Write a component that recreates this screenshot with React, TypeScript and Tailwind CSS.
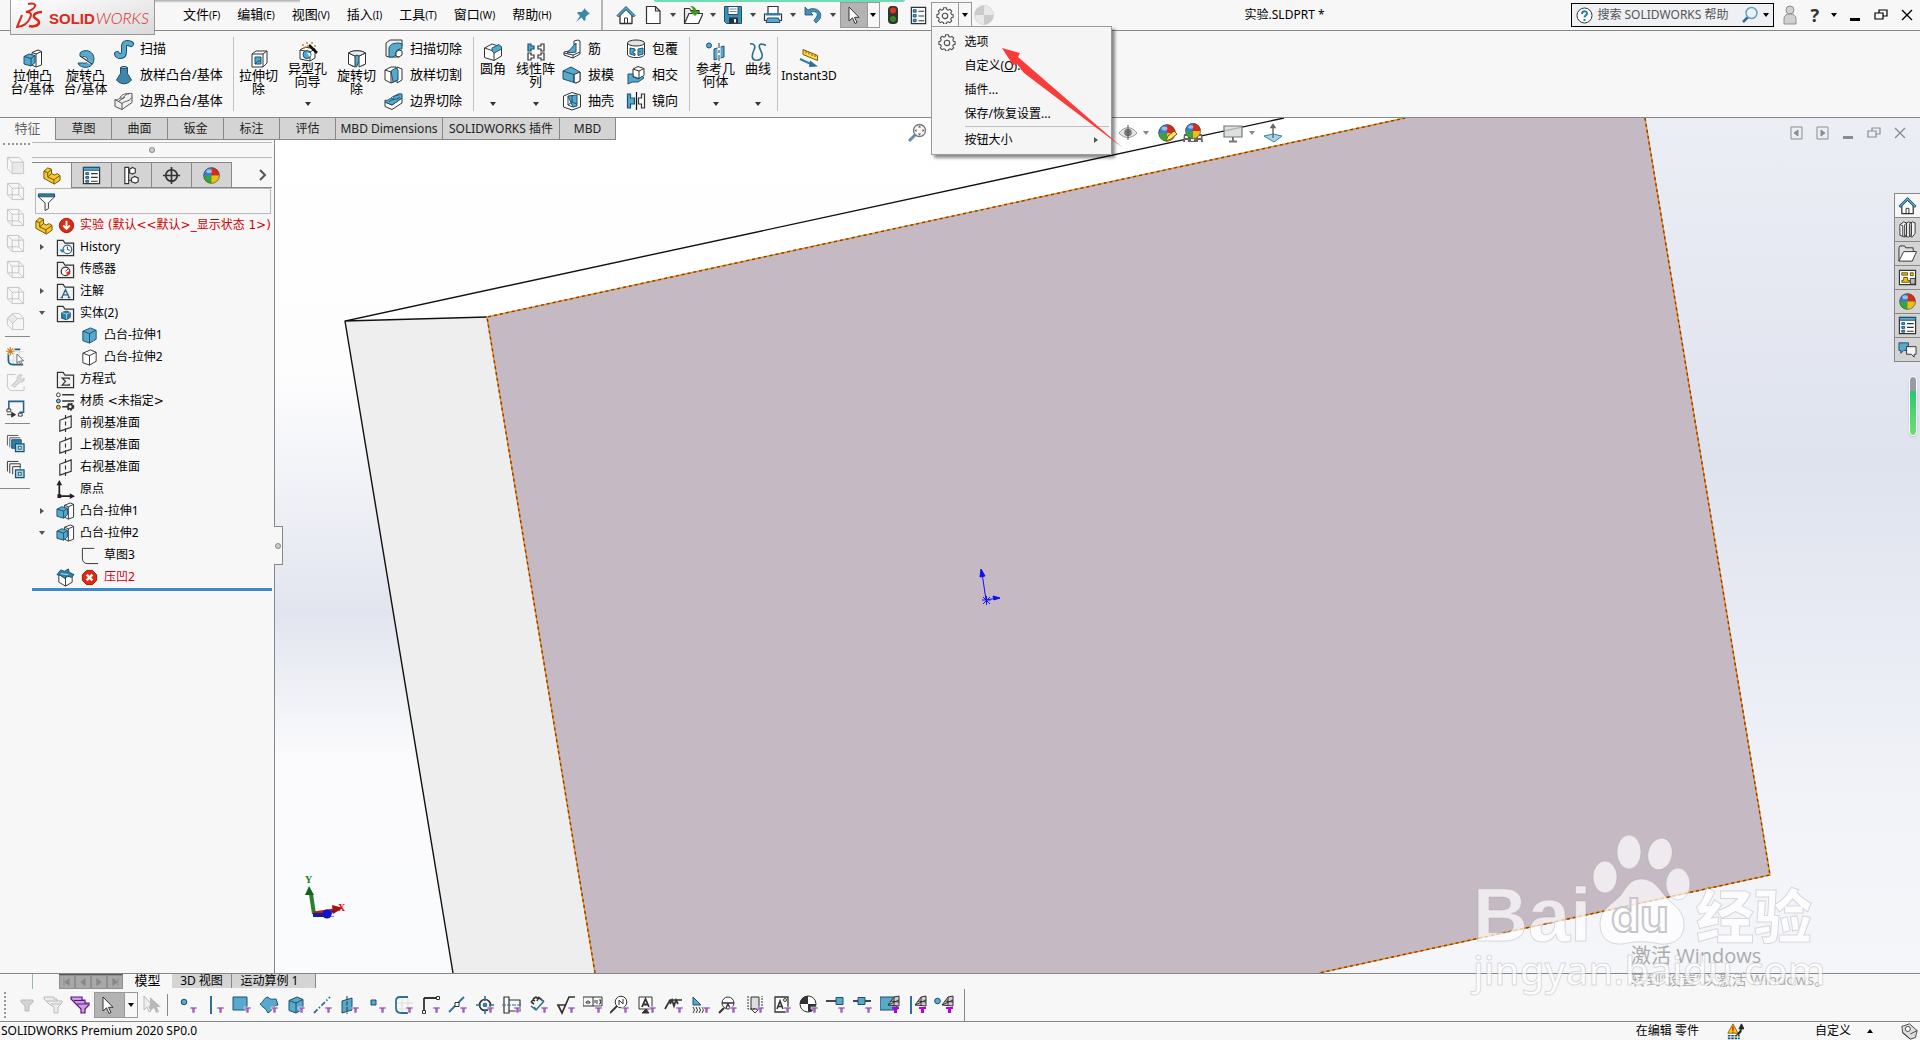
import { useState, type ReactNode } from 'react';

const K = '#333333';
const B = '#58a9cc';
const D = '#1b526f';
const G = '#b9b9b9';

function Svg({ children, size = 20, className = '' }: { children: ReactNode; size?: number; className?: string }) {
  return (
    <svg viewBox="0 0 20 20" width={size} height={size} fill="none" className={`shrink-0 ${className}`} aria-hidden="true">
      {children}
    </svg>
  );
}

const cube = (
  <g strokeLinejoin="round">
    <path d="M3 5.5 11 2l6 2.500v9.500L10 18l-7-2.500z" fill={B} stroke={D} />
    <path d="M3 5.500 10 8l7-3.500M10 8v10" stroke={D} />
  </g>
);

const part = (
  <g stroke="#6f5406" strokeLinejoin="round">
    <path d="M2 5.500 6 2l4 1.500V8l3 1.500L16 8l3 2v5l-6 4L2 13z" fill="#f5c731" />
    <path d="M2 5.500 6 7v4.500l6.500 3V19M6 7l4-3.500M6 11.500 10 8M12.500 14.500 19 10" />
  </g>
);

const boss = (
  <g strokeLinejoin="round">
    <path d="M9 3.500 15 1l3.500 1.500V16L13 18l-4-2z" fill="#fff" stroke={K} />
    <path d="M13 18V5L9 3.500M13 5l5.500-2.500" stroke={K} />
    <path d="M1 7.500 6 5l6 1.500v7L8 17l-7-2z" fill={B} stroke={D} />
    <path d="M1 7.500 8 9.500V17M8 9.500l4-3" stroke={D} />
  </g>
);

const folder = <path d="M1.500 18.500v-16h6l2 3h9v13z" fill="#f1f1f1" stroke={K} strokeWidth="1.300" />;

const ball = (
  <g>
    <circle cx="10" cy="10" r="8.500" fill="#3aa23a" />
    <path d="M10 10V1.500A8.500 8.500 0 0 0 1.500 10z" fill="#3c78d8" />
    <path d="M10 10V1.500A8.500 8.500 0 0 1 18.500 10z" fill="#d9291c" />
    <path d="M10 10h8.500A8.500 8.500 0 0 1 10 18.500z" fill="#eebd16" />
    <circle cx="10" cy="10" r="8.300" stroke="#4a4a4a" strokeOpacity=".6" />
    <ellipse cx="7.500" cy="5.500" rx="3" ry="2" fill="#fff" fillOpacity=".5" />
  </g>
);

const gear = (
  <g stroke="#4c4c4c" strokeWidth="1.200">
    <path d="M8.500 2h3l.6 2 1.500.7 1.900-1 2 2-1 1.900.6 1.500 1.900.5v3l-1.900.5-.7 1.500 1 1.900-2 2-1.900-1-1.500.6-.5 1.900h-3L8 18.100l-1.500-.6-1.900 1-2-2 1-1.900-.7-1.500L1 12.600v-3L2.900 9l.7-1.500-1-1.900 2-2 1.900 1L8 4z" />
    <circle cx="10" cy="11" r="3" />
  </g>
);

const plane = (
  <g stroke={K} strokeWidth="1.200">
    <path d="M4 6.500 16 2v12L4 18z" />
    <path d="M10 1v4M10 8v4M10 15v4" />
  </g>
);

const cursor = <path d="M5 2v14l3.500-3.200L11 18.500l2-1-2.500-5.200H15z" fill="#fff" stroke={K} />;

const house = (
  <g strokeLinejoin="round">
    <path d="M4 10v8.500h12V10l-6-6z" fill="#fff" stroke={K} strokeWidth="1.300" />
    <path d="M8.500 18.500V13h3v5.500" stroke={K} />
    <path d="M1 10.500 10 1.500l9 9-1.500 1.500L10 4.500 2.500 12z" fill={B} stroke={D} />
  </g>
);

const list = (
  <g>
    <path d="M2.500 1.500h15v17h-15z" fill="#f4f9fc" stroke={K} strokeWidth="1.300" />
    <path d="M4.500 4h3v2.500h-3zM4.500 9h3v2.500h-3zM4.500 14h3v2.500h-3z" fill={B} stroke={D} />
    <path d="M10 5.500h6M10 10.500h6M10 15.500h6" stroke={K} strokeWidth="1.200" />
  </g>
);

const listHead = (
  <g>
    <path d="M1.500 1.500h17v17h-17z" fill="#fff" stroke={K} strokeWidth="1.300" />
    <path d="M1.500 1.500h17v3h-17z" fill={B} stroke={D} />
    <path d="M4 7h3v2H4zM4 11h3v2H4zM4 15h3v2H4z" fill={B} stroke={D} />
    <path d="M9.500 8h7M9.500 12h7M9.500 16h7" stroke={K} strokeWidth="1.200" />
  </g>
);

const icons: Record<string, ReactNode> = {
  house,
  newDoc: <path d="M3.500 1.500h9l4.500 4.500v12.500H3.500zM12.500 1.500v4.500H17" fill="#fff" stroke={K} strokeWidth="1.200" />,
  open: (
    <g strokeLinejoin="round">
      <path d="M1.500 18.500v-15h5l1.500 2h8v3" fill="#ececec" stroke={K} strokeWidth="1.200" />
      <path d="M1.500 18.500 6 8.500h14l-4.500 10z" fill="#fff" stroke={K} strokeWidth="1.200" />
      <path d="M7 1c4 0 6 2 6.500 5h3.500l-5 5-5-5h3c0-2-1-4-3-5z" fill="#3d9a1c" />
    </g>
  ),
  save: (
    <g>
      <path d="M1.500 1.500h17v17h-15l-2-2z" fill="#3f8fb5" stroke={D} />
      <path d="M5 1.500h10v8H5z" fill="#fff" stroke={D} />
      <path d="M6.500 4h7M6.500 6.500h7" stroke="#888" />
      <path d="M6 12.500h9v6H6z" fill="#25303a" />
      <path d="M11 14h2v3.500h-2z" fill="#fff" />
    </g>
  ),
  print: (
    <g>
      <path d="M5 9V1.500h10V9z" fill="#fff" stroke={K} strokeWidth="1.200" />
      <path d="M1.500 9h17v6.500h-17z" fill="#fafafa" stroke={K} strokeWidth="1.200" />
      <path d="M3 8h14v2.500H3z" fill="#2f7fa6" />
      <path d="M4.500 13h11l1.500 4.500H3z" fill={B} stroke={D} />
    </g>
  ),
  undo: <path d="M2 2v8h8L7.500 7.500C12 5 16 8 13.500 12L11 15.500l2 2.500c4-3 6-7 4-10.500C15 3.500 9 2.500 5 5z" fill="#4690b8" stroke={D} strokeWidth=".8" />,
  cursor,
  traffic: (
    <g>
      <rect x="5" y="1" width="10" height="18" rx="4" fill="#333" />
      <circle cx="10" cy="5.500" r="3" fill="#e2371f" />
      <circle cx="10" cy="14" r="3" fill="#2f8a1d" />
    </g>
  ),
  list,
  listHead,
  gear,
  ball,
  grayBall: (
    <g>
      <circle cx="10" cy="10" r="9.500" fill="#e9e9e9" stroke="#d8d8d8" />
      <path d="M10 10V.5A9.500 9.500 0 0 0 .5 10zM10 10v9.500A9.500 9.500 0 0 0 19.500 10z" fill="#cbcbcb" />
    </g>
  ),
  boss,
  revolve: (
    <g>
      <path d="M4 4c5-5 14-2 14 6s-9 11-15 6l-1-2h6c4 1 5-4 2-6-2-1-4 0-6-1z" fill={B} stroke={D} />
      <path d="M4 7.500l11 7" stroke="#fff" strokeWidth="2.500" />
      <path d="M4 7l12 8" stroke={K} strokeWidth="1.200" />
    </g>
  ),
  sweep: (
    <g strokeLinecap="round">
      <path d="M3 15c1 3 7 3 7-2V8c0-5 4-4.500 7-3" stroke={D} strokeWidth="6" />
      <path d="M3 15c1 3 7 3 7-2V8c0-5 4-4.500 7-3" stroke={B} strokeWidth="4" />
    </g>
  ),
  loft: <path d="M6.500 2.500c2-1.500 5-1.500 7 0v6L17.500 15c-4 5-11 5-15 0l4-6.500zM6.500 2.500c2 1.500 5 1.500 7 0" fill="#3f86a8" stroke={D} />,
  boundary: (
    <g stroke="#555" strokeLinejoin="round">
      <path d="M1 8.500c3 2 4-3 8-1 1-3 5-6 9-5v9L8 18.500l-7-3z" fill="#f0f0f0" />
      <path d="M1 8.500l7 4v6M8 12.500c3-3 6-1 10-6M6 7c1-3 5-5 9-4M5 10l6-4" />
    </g>
  ),
  cutBoundary: (
    <g stroke={D} strokeLinejoin="round">
      <path d="M1 11l7 3 10-7v5L8 18.500l-7-3z" fill="#fff" stroke={K} />
      <path d="M1 9c3 2 4-3 8-1 1-3 5-6 9-5v4L8 14l-7-3z" fill={B} />
      <path d="M5 11c3-4 7-1 11-5M7 7c2-2 5-3 8-3" />
    </g>
  ),
  cutExtrude: (
    <g strokeLinejoin="round">
      <path d="M3 5 7 2h11v12l-4 4H3z" fill="#fff" stroke={K} />
      <path d="M3 5h11v13M14 5l4-3" stroke={K} />
      <path d="M6 8h6v7H6z" fill={B} stroke={D} />
      <path d="M6 15l3-3h3" stroke={D} />
    </g>
  ),
  hole: (
    <g strokeLinejoin="round">
      <path d="M2 8l5-3 10 2v9l-5 3-10-2z" fill="#fff" stroke={K} />
      <path d="M2 8l10 2v9M12 10l5-3" stroke={K} />
      <circle cx="9" cy="12.500" r="4" fill={B} stroke={D} />
      <path d="M9 11l3 4a4 4 0 0 0 0-4z" fill="#fff" />
      <path d="M11 3l8 8" stroke="#111" strokeWidth="2.500" />
      <path d="M4 3h2M8 1h2M5 6h2M13 1h2M16 4h2M9 4h2" stroke="#d7881a" strokeWidth="1.600" />
    </g>
  ),
  cutRevolve: (
    <g strokeLinejoin="round">
      <path d="M1.500 4c4-3 13-3 17 0v11l-4 2-3-4-2 5-4-1-4-2z" fill={B} stroke={D} />
      <path d="M1.500 4 8 7v11l-6.500-3zM18.500 4 12 7v11l6.500-3z" fill="#fff" stroke={K} />
      <path d="M1.500 4c4-3 13-3 17 0L12 7l-2-1-2 1z" fill="#e4eff5" stroke={K} />
    </g>
  ),
  cutSweep: (
    <g strokeLinejoin="round">
      <path d="M2 4l4-3h12v6l-3 3v8H5l-3-1z" fill="#eee" stroke={K} />
      <path d="M5 18V9c1-4 5-5 10-5l3 1v5c-5 0-6 1-6 6l-3 2z" fill={B} stroke={D} />
      <path d="M12 13l3-2 3 1v4l-3 2-3-1z" fill="#fff" stroke={K} />
    </g>
  ),
  cutLoft: (
    <g strokeLinejoin="round">
      <path d="M1 5l6-3h5v14l-5 2-6-3z" fill="#fff" stroke={K} />
      <path d="M13 2l5 2v11l-5 3z" fill="#fff" stroke={K} />
      <path d="M7 6l5-3 2 2v10l-5 2z" fill={B} stroke={D} />
      <path d="M1 5l6 2v11" stroke={K} />
    </g>
  ),
  fillet: (
    <g strokeLinejoin="round">
      <path d="M1.500 6 9 2l9.500 3v9L11 18.500l-9.500-3z" fill="#fff" stroke={K} />
      <path d="M9 9c0-2 0-3 0-3l7-3.500L18.500 5v2L11 11z" fill={B} stroke={D} />
      <path d="M1.500 6 9 8.500M11 11v7.500" stroke={K} />
    </g>
  ),
  pattern: (
    <g strokeWidth="1.200">
      <path d="M2 2h3v2h3v3H5v2H2z" fill={B} stroke={D} />
      <path d="M18 2h-3v2h-3v3h3v2h3zM2 11h3v2h3v3H5v2H2zM18 11h-3v2h-3v3h3v2h3z" fill="#fff" stroke={K} />
    </g>
  ),
  rib: (
    <g strokeLinejoin="round">
      <path d="M12 2l4-1 2 1v13l-7 4-9-3v-3l10-2z" fill="#fff" stroke={K} />
      <path d="M14 4v9l-9 1z" fill={B} stroke={D} />
      <path d="M2 14l9 2 7-3M11 16v3" stroke={K} />
    </g>
  ),
  draft: (
    <g strokeLinejoin="round">
      <path d="M1 6 9 2l9 5v9l-4 2-13-4z" fill={B} stroke={D} />
      <path d="M12 9.500l6-2.500v9l-4 2-2-.6z" fill="#fff" stroke={K} />
      <path d="M1 6l11 3.500v8" stroke={D} />
    </g>
  ),
  shell: (
    <g strokeLinejoin="round">
      <path d="M1.500 5 10 1.500 18.500 4v12L10 19l-8.500-3z" fill="#fff" stroke={K} />
      <path d="M6 5l9-1v11l-4 1z" fill={B} stroke={D} />
      <path d="M6 5v9l5 2M10 4v7l5 2M6 14l4-3" stroke={D} />
    </g>
  ),
  wrap: (
    <g>
      <path d="M1.500 4v12c3 3.500 14 3.500 17 0V4" fill="#fff" stroke={K} />
      <ellipse cx="10" cy="4" rx="8.500" ry="3" fill="#e5e5e5" stroke={K} />
      <path d="M4 9l5 1v2H7v2l2 .5v2L4 15zM17 9l-5 1v6.500l5-1.500zM14 11.500v2" fill={B} stroke={D} />
    </g>
  ),
  intersect: (
    <g strokeLinejoin="round">
      <path d="M7 4l5-2.500 6 2v7l-5 3-6-2z" fill="#fff" stroke={K} />
      <path d="M7 4l6 2v7M13 6l5-2.500" stroke={K} />
      <path d="M2 9h5v3l6 2 3-3 2 2-6 4H6l-4 2z" fill={B} stroke={D} />
    </g>
  ),
  mirror: (
    <g strokeWidth="1.200">
      <path d="M1.500 3h3v4h4v6h-4v4h-3z" fill={B} stroke={D} />
      <path d="M18.500 3h-3v4h-3v6h3v4h3z" fill="#fff" stroke={K} />
      <path d="M10.500 1v18" stroke="#111" />
    </g>
  ),
  refGeom: (
    <g>
      <circle cx="3" cy="3.500" r="2.500" fill={B} stroke={D} />
      <path d="M8 7l10-3v11L8 18z" fill={B} stroke={D} />
      <path d="M13 2v17" stroke="#fff" strokeWidth="3" />
      <path d="M13 1v5M13 8v3M13 13v6" stroke={K} />
    </g>
  ),
  curve: (
    <g stroke="#2c6d8f" strokeWidth="1.600">
      <path d="M2 2c4-1 6 2 4 6s-3 9 1 10c5 1 8-2 7-6s-5-9-1-10c2 0 3 1 5 1" />
    </g>
  ),
  instant: (
    <g>
      <path d="M4 1.500 18.500 7.500v5L4 6.500z" fill="#ffd94a" stroke="#7b5a00" />
      <path d="M7 3v2.500M10 4v2.500M13 5.500V8M16 6.500V9" stroke="#7b5a00" />
      <path d="M1 11l12 5.500" stroke="#2f7fa6" strokeWidth="2" />
      <path d="M11 12.500l8 6-9 .5z" fill="#2f6f92" />
    </g>
  ),
  part,
  tree: (
    <g stroke={K} strokeWidth="1.200" fill="#fff">
      <path d="M3 1.500h4v17H3zM7 7h4M7 15h4" />
      <path d="M8 3.500l3-2 3 1.500v4l-3 1.500-3-1.500zM10 13l3-2 4 1.500v4L14 18l-4-1.500z" />
    </g>
  ),
  target: (
    <g stroke={K} strokeWidth="1.800">
      <circle cx="10" cy="10" r="6" />
      <path d="M10 1v18M1 10h18" />
    </g>
  ),
  funnel: (
    <g>
      <path d="M1.500 3h17v2l-6.500 6.500v6l-3.500 2v-8L1.500 5z" fill="#fff" stroke={K} />
      <path d="M1.500 2h17v3h-17z" fill="#2f7fa6" stroke={D} />
    </g>
  ),
  down: (
    <g>
      <circle cx="10" cy="10" r="7.500" fill="#dd2a12" stroke="#a31505" />
      <path d="M10 5v8M6.500 10l3.500 3.500 3.500-3.500" stroke="#fff" strokeWidth="2" />
    </g>
  ),
  error: (
    <g>
      <path d="M7 2.500h6L17.500 7v6L13 17.500H7L2.500 13V7z" fill="#dd2a12" stroke="#a31505" />
      <path d="M7 7l6 6M13 7l-6 6" stroke="#fff" strokeWidth="2.500" />
    </g>
  ),
  history: (
    <g>
      {folder}
      <circle cx="12" cy="12" r="4.500" fill="#fff" stroke="#2f6f92" strokeWidth="1.300" />
      <path d="M12 9v3l2.500 1" stroke={K} />
      <path d="M3.500 12h6l-3 3.500z" fill="#2f7fa6" />
    </g>
  ),
  sensor: (
    <g>
      {folder}
      <circle cx="10" cy="12" r="4.500" fill="#fff" stroke={K} strokeWidth="1.300" />
      <path d="M10 12l3-3" stroke={K} />
      <path d="M11 13l4-2-1 4-3 1.500z" fill="#e2391f" />
    </g>
  ),
  notes: (
    <g>
      {folder}
      <path d="M6 16.500 10 8l4 8.500M7.500 13.500h5M4.800 16.500h2.600M12.400 16.500H15" stroke="#2a6484" strokeWidth="1.400" />
    </g>
  ),
  bodies: (
    <g>
      {folder}
      <path d="M6 9l5-1.500 4 1.500v5l-4 2.500L6 15z" fill="#2f7fa6" stroke={D} />
      <path d="M6 9l5 1.500 4-1.500M11 10.500V16" stroke="#bfe0ee" strokeWidth=".8" />
    </g>
  ),
  cube,
  cubeWhite: (
    <g stroke={K} strokeLinejoin="round">
      <path d="M3 5.500 11 2l6 2.500v9.500L10 18l-7-2.500z" fill="#fff" />
      <path d="M3 5.500 10 8l7-3.500M10 8v10" />
    </g>
  ),
  sigma: (
    <g>
      {folder}
      <path d="M14 10V8.500H6.500L10 12l-3.500 4H14v-1.500" stroke={K} strokeWidth="1.300" />
    </g>
  ),
  material: (
    <g>
      <circle cx="2.500" cy="3" r="2" fill="#fff" stroke={K} />
      <circle cx="2.500" cy="9.500" r="2" fill="#66c0e6" stroke={K} />
      <circle cx="2.500" cy="16" r="2" fill="#f4c430" stroke={K} />
      <path d="M6.500 3H19M6.500 9.500H19M6.500 15.500h5" stroke={K} strokeWidth="1.600" />
      <circle cx="15" cy="15.500" r="3" stroke={K} strokeWidth="2.500" strokeDasharray="2 .8" />
      <circle cx="15" cy="15.500" r="2.300" stroke={K} strokeWidth="1.500" />
    </g>
  ),
  plane,
  origin: (
    <g>
      <path d="M3.500 4v13H16" stroke="#222" strokeWidth="1.800" />
      <path d="M.5 5.500 3.500 0l3 5.500zM14.500 14l5.500 3-5.500 3zM1.500 15h4v4h-4z" fill="#222" />
    </g>
  ),
  sketch: <path d="M15 2.500H2.500V13c0 3 2 5.500 5 5.500H19" stroke={K} />,
  indent: (
    <g strokeLinejoin="round">
      <path d="M3 7l7 3 7-3v8l-7 4-7-4z" fill="#fff" stroke={K} />
      <path d="M10 10v9" stroke={K} />
      <path d="M1 7l4-5 4 1.500L13 1l1 3.500 5 2.500-3 3-4-2-3 3-4-3z" fill="#2f7fa6" stroke={D} />
      <path d="M5 6l8 1" stroke="#bfe0ee" />
    </g>
  ),
  books: (
    <g stroke={K} strokeLinejoin="round" fill="#f4f4f4">
      <path d="M2 5l4-3 3 1v12l-2 3-5-2zM7 5l4-3 3 1v12l-3 3-4-1zM12 4l3-2 3 1v11l-3 4-3-1z" />
      <path d="M2 5l3 1v11M9 6v11M14 5v12" />
    </g>
  ),
  folderOpen: (
    <g stroke={K} strokeLinejoin="round">
      <path d="M1 18V4l1-2h5l1 2h8v4" fill="#ddd" />
      <path d="M1 18 6 8h13.500L15 18z" fill="#fff" />
    </g>
  ),
  palette: (
    <g>
      <path d="M1.500 2.500h17v15h-17z" fill="#fff" stroke={K} strokeWidth="1.200" />
      <path d="M4 5h6v2.500H4zM13 5h3v3h-3zM4 15v-2h2v-3h4v3h2v2z" fill="#f4c020" stroke="#6f5406" />
      <path d="M13 11h5v6h-5z" fill="#bbb" stroke={K} />
    </g>
  ),
  chat: (
    <g strokeLinejoin="round">
      <path d="M1 3h10v8H6l-3 3v-3H1z" fill={B} stroke={D} />
      <path d="M9 7h10v8h-2v3l-3-3H9z" fill="#f6f6f6" stroke={K} />
    </g>
  ),
  zoomFit: (
    <g>
      <path d="M2 18l7-7" stroke="#5c8fa8" strokeWidth="3" />
      <circle cx="12.500" cy="7.500" r="6" fill="#f7f7f7" stroke="#777" strokeWidth="1.300" />
      <path d="M12.500 2.500l1.500 2h-3zM12.500 12.500l1.500-2h-3zM7.500 7.500l2-1.500v3zM17.500 7.500l-2-1.500v3z" fill="#555" />
    </g>
  ),
  eye: (
    <g>
      <path d="M1 10c5-7 13-7 18 0-5 6-13 6-18 0z" fill="#e4e4e4" stroke="#9b9b9b" />
      <circle cx="10" cy="9.500" r="3.800" fill="#777" />
      <path d="M10 2v15" stroke="#555" />
    </g>
  ),
  appearance: (
    <g>
      {ball}
      <path d="M9 18l2-5 6-5 3 3-6 5z" fill="#ffe27a" stroke="#7b5a00" />
    </g>
  ),
  scene: (
    <g>
      <path d="M1 11h18l1 8H0z" fill="#666" />
      <path d="M2 13h3v2H2zM8 16h3v2H8zM15 13h3v2h-3zM2 17h3v2H2zM15 17h3v2h-3z" fill="#eee" />
      <g transform="translate(1 -1) scale(.9)">{ball}</g>
    </g>
  ),
  monitor: (
    <g stroke="#777" strokeWidth="1.200">
      <path d="M1 3h18v11H1z" fill="#d4d8da" fillOpacity=".8" />
      <path d="M10 14v4M6 18.500h8" strokeWidth="2" />
    </g>
  ),
  pinPlane: (
    <g>
      <path d="M1 13l9-2 9 2-8 6z" fill="#a9d5e6" stroke="#3b7f9f" />
      <path d="M10 15V3M8 4.500l2-3 2 3z" stroke="#666" strokeWidth="1.400" fill="#666" />
    </g>
  ),
  wire: (
    <g stroke="#c4c4c4">
      <path d="M1.500 1.500h12l5 5v12h-12l-5-5zM1.500 1.500l5 5h12M6.500 6.500v12M13.500 1.500v12h-12M13.500 13.500l5 5" />
    </g>
  ),
  wireFill: (
    <g stroke="#c4c4c4">
      <path d="M1.500 1.500h12l5 5M1.500 1.500v12l5 5M1.500 1.500l5 5" />
      <path d="M6.500 6.500h12v12h-12z" fill="#e9e9e9" />
    </g>
  ),
  wireIso: (
    <g stroke="#c4c4c4">
      <path d="M1.500 6.500 7 1.500h7l4.500 5v12h-12l-5-5z" />
      <path d="M2 7l5-5 5 5-5 5zM7 12v6M12 7h6" fill="#e9e9e9" />
    </g>
  ),
  sketchNew: (
    <g>
      <path d="M9 5h10M9 11h10M14 2v17M8 2v17M3 14h16" stroke="#ddd" />
      <path d="M9 2.500h6M2.500 8v6c0 3 2 4.500 4.500 4.500h11" stroke="#1f6486" strokeWidth="1.800" />
      <path d="M4.500 0v9M0 4.500h9M1.500 1.500l6 6M7.500 1.500l-6 6" stroke="#d2791a" strokeWidth="1.200" />
      <g transform="translate(8 6) scale(.7)">{cursor}</g>
    </g>
  ),
  sketchEdit: (
    <g stroke="#c4c4c4">
      <path d="M10 1.500H1.500v11c0 4 2 6 5 6H19V14" />
      <path d="M6 13l6-6c-1-3 1-6 5-5l-2 3 2 2 2-2c1 4-2 5-4 4l-6 6z" fill="#ddd" />
    </g>
  ),
  dimension: (
    <g>
      <path d="M3 12V2.500h15.500V14H14" stroke="#1f6486" strokeWidth="1.600" />
      <path d="M1 10.500h4v3H1zM13 15h4v3h-4z" fill="#fff" stroke={K} />
      <path d="M1 16.500h5M6 14l4 2.500L6 19z" stroke={K} fill={K} />
    </g>
  ),
  copyBlue: (
    <g>
      <path d="M1.500 12V1.500H13M4 14V4h11" stroke="#555" />
      <path d="M6 6h10v9H6z" fill="#2f7fa6" stroke={D} />
      <path d="M10 10.500h9v8h-9z" fill="#a8d6ea" stroke={D} strokeWidth="1.300" />
      <path d="M13 13h3v3h-3z" fill="#fff" stroke={D} />
    </g>
  ),
  copyWhite: (
    <g>
      <path d="M1.500 12V1.500H13M4 14V4h11v5M7 15V7h8" stroke={K} />
      <path d="M10 10.500h9v8h-9z" fill="#a8d6ea" stroke={D} strokeWidth="1.300" />
      <path d="M13 13h3v3h-3z" fill="#fff" stroke={D} />
    </g>
  ),
};

/* selection filter toolbar drawings, each one gets the funnel badge */
const filterIcons: [string, ReactNode][] = [
  ['顶点', <circle cx="6" cy="7" r="2.800" fill={B} stroke={D} />],
  ['边线', <path d="M6 1v18" stroke="#2c7297" strokeWidth="2" />],
  ['面', <path d="M1 2h14v13H1z" fill={B} stroke={D} />],
  ['曲面', <path d="M1 9c4-2 3-6 8-7 2 3 5 2 8 2l2 6c-4 0-5 5-10 8C6 12 4 13 1 9z" fill={B} stroke={D} />],
  ['实体', cube],
  ['基准轴', <path d="M1 18 17 2" stroke="#2c7297" strokeWidth="1.800" strokeDasharray="5 2 1.500 2" />],
  ['基准面', <g><path d="M2 6l10-3v12L2 18z" fill={B} stroke={D} /><path d="M7 1v18" stroke={K} strokeDasharray="4 1.500" /></g>],
  ['草图点', <path d="M4 5h5v5H4z" fill={B} stroke={D} />],
  ['草图', <g><path d="M8 2v16M14 2v16M2 8h17M2 14h17" stroke="#ddd" /><path d="M14 2H6Q2 2 2 6v7q0 5 5 5h7" stroke="#2c7297" strokeWidth="1.800" /></g>],
  ['草图线段', <g stroke={K}><path d="M3 3h14M3 3v15" strokeWidth="1.800" /><path d="M1.500 15.500h3v3h-3zM15.500 1.500h3v3h-3z" fill="#fff" /></g>],
  ['中点', <g><path d="M1 17 16 2" stroke="#2c7297" strokeWidth="1.800" /><path d="M7 7.500h4v4H7z" fill="#fff" stroke={K} /></g>],
  ['中心符号', <g stroke="#2c7297" strokeWidth="1.600"><circle cx="10" cy="10" r="5.500" stroke={K} /><path d="M10 1v5M10 14v5M1 10h5M14 10h5" /><circle cx="10" cy="10" r="1.500" fill={B} /></g>],
  ['中心线', <g><path d="M2 2h5v16H2zM7 5h11v11H7" stroke={K} strokeWidth="1.200" /><path d="M0 10h19" stroke="#2c7297" strokeDasharray="4 1" /></g>],
  ['尺寸', <g><path d="M2 7l3 2M2 7l2-2 2 1M4 4l3-2 2 2-1 2M9 2l4 3" stroke={K} strokeWidth="1.600" /><path d="M2 11l5 4 8-9M5 12l2 3M12 5l3 1" stroke="#2c7297" strokeWidth="1.600" /></g>],
  ['表面粗糙度', <path d="M1 10h9M2 10l4 8 7-16h6" stroke={K} strokeWidth="1.700" />],
  ['形位公差', <g stroke={K}><path d="M0 2h19v9H0zM10 2v9M3 8a2 2 0 0 1 4 0zM14 5v4M16 5h2l-1 2 1 1-2 1M12 5v3" /></g>],
  ['注释', <g><path d="M0 18l7-7" stroke={K} strokeWidth="1.800" /><circle cx="11" cy="7" r="5.800" fill="#fff" stroke={K} /><path d="M9 10V5l4 4V4" stroke={K} /></g>],
  ['基准特征', <g stroke={K}><path d="M2 2h13v12H2z" fill="#fff" /><path d="M5 12l3.500-8 3.500 8M6.500 9.500h4" strokeWidth="1.800" /><path d="M5 18h7l-3-4z" fill={K} /></g>],
  ['焊接符号', <path d="M1 14 6 5h12M6 9l2-4 2 6 2-6 2 4" stroke={K} strokeWidth="1.700" />],
  ['焊缝', <g><path d="M2 2v8h8z" fill={B} stroke={D} /><path d="M2 12q3 3 0 6M5 12q3 3 0 6M8 12q3 3 0 6M11 12q3 3 0 6" stroke={K} /></g>],
  ['基准目标', <g stroke={K}><path d="M1 18l5-5" strokeWidth="2" /><circle cx="10" cy="8" r="6" fill="#fff" /><path d="M4 8h12M8 13l2-4 2 4" strokeWidth="1.400" /></g>],
  ['装饰螺纹', <g stroke={K}><path d="M6 2h8v12H6z" fill="#ddd" /><path d="M3 1v13h14V1" strokeDasharray="2 1" /><path d="M6 14l4 4 4-4" /></g>],
  ['块', <g stroke={K}><path d="M3 2h13v15H3z" fill="#fff" strokeWidth="1.300" /><path d="M5 14l3-8 3 8M6 11.500h4" strokeWidth="1.600" /><circle cx="13" cy="5" r="1.500" /></g>],
  ['销钉符号', <g><circle cx="9" cy="9" r="8" fill="#fff" stroke={K} /><path d="M9 9V1A8 8 0 0 0 1 9zM9 9v8A8 8 0 0 0 17 9z" fill="#333" /></g>],
  ['连接点', <g><path d="M0 6h10" stroke={K} strokeWidth="1.800" /><path d="M10 2.500h7v7h-7z" fill={B} stroke={D} /></g>],
  ['线路点', <g><path d="M0 6h18" stroke={K} strokeWidth="1.800" /><path d="M5 2.500h7v7H5z" fill={B} stroke={D} /></g>],
];

const meshIcons: [string, ReactNode][] = [
  ['网格面', <path d="M0 2h17v13H0z" fill={B} stroke={D} />],
  ['网格边线', <path d="M4 1v18" stroke="#2c7297" strokeWidth="2" />],
  ['网格顶点', <circle cx="3.500" cy="6" r="2.800" fill={B} stroke={D} />],
];

function Icon({ name, size, className }: { name: string; size?: number; className?: string }) {
  return <Svg size={size} className={className}>{icons[name]}</Svg>;
}

function Caret({ className = '' }: { className?: string }) {
  return (
    <svg viewBox="0 0 6 4" width="6" height="4" className={className} aria-hidden="true">
      <path d="M0 0h6L3 4z" fill="currentColor" />
    </svg>
  );
}

const menus = [['文件', 'F'], ['编辑', 'E'], ['视图', 'V'], ['插入', 'I'], ['工具', 'T'], ['窗口', 'W'], ['帮助', 'H']];

const quickTools: [string, string][] = [['新建', 'newDoc'], ['打开', 'open'], ['保存', 'save'], ['打印', 'print'], ['撤消', 'undo']];

function WindowButtons() {
  return (
    <div className="flex items-center">
      <button aria-label="最小化" className="flex h-5 w-[26px] items-center justify-center">
        <svg width="12" height="14" fill="currentColor"><path d="M1 10h10v3H1z" /></svg>
      </button>
      <button aria-label="还原" className="flex h-5 w-[26px] items-center justify-center">
        <svg width="14" height="14" fill="none" stroke="currentColor" strokeWidth="1.200"><path d="M1 5h8v6H1zM5 5V2h8v6H9" /></svg>
      </button>
      <button aria-label="关闭" className="flex h-5 w-[26px] items-center justify-center">
        <svg width="12" height="14" fill="none" stroke="currentColor" strokeWidth="1.400"><path d="M1 2l10 10M11 2 1 12" /></svg>
      </button>
    </div>
  );
}

function OptionsMenu() {
  return (
    <div className="absolute top-[23px] left-[-1px] z-30 w-[181px] border border-[#9a9a9a] bg-[#f5f5f5] pt-[3px] pb-px text-xs shadow-[3px_3px_3px_rgba(0,0,0,0.45)]">
      <button className="flex h-6 w-full items-center pl-[6px] text-left">
        <Icon name="gear" size={18} className="mr-[9px]" />
        选项
      </button>
      <button className="flex h-6 w-full items-center pl-[33px]">
        自定义(<span className="underline">O</span>)...
      </button>
      <button className="flex h-6 w-full items-center pl-[33px]">插件...</button>
      <button className="flex h-6 w-full items-center pl-[33px]">保存/恢复设置...</button>
      <hr className="mr-[2px] ml-[33px] border-[#bdbdbd]" />
      <button className="flex h-[26px] w-full items-center justify-between pr-3 pl-[33px]">
        按钮大小
        <Caret className="-rotate-90 text-[#555]" />
      </button>
    </div>
  );
}

function Header() {
  const [open, setOpen] = useState(true);
  return (
    <header className="relative z-20 flex h-[31px] shrink-0 items-center border-b border-[#878787] bg-[#f7f7f7]">
      <div className="absolute top-0 left-4 h-[3px] w-[284px] bg-gradient-to-b from-[#a9a9a9] to-transparent" />
      <div className="absolute top-0 left-[654px] h-[2px] w-[251px] rounded-b bg-[#6fdcb4]" />
      <h1 className="relative z-10 ml-[10px] flex h-[35px] w-[145px] items-center self-start border border-t-0 border-[#999] bg-gradient-to-br from-white to-[#dadada] pt-[2px] pl-[5px] text-[#da291c]">
        <svg width="28" height="28" viewBox="0 0 28 28" fill="none" className="mb-1 shrink-0" aria-hidden="true">
          <path d="M12 2c5-1 8 0 7 2-1 3-5 5-9 6 5 0 6 2 4 6-2 5-7 9-13 9 2-5 4-9 5-12" stroke="#da291c" strokeWidth="2" />
          <path d="M26 10c-5 0-9 2-8 5 1 2 6 3 5 6s-6 4-10 3" stroke="#da291c" strokeWidth="2.500" />
        </svg>
        <span className="ml-[5px] font-['Liberation_Sans',sans-serif] text-[15px]"><b>SOLID</b><i className="ml-px font-['Lato',sans-serif] text-base font-light">WORKS</i></span>
      </h1>
      <nav className="ml-7 flex items-center gap-[17px] text-[13px]">
        {menus.map(([label, key]) => (
          <button key={key} className="whitespace-nowrap">
            {label}<span className="text-[10px]">({key})</span>
          </button>
        ))}
      </nav>
      <div className="ml-6 flex h-[30px] w-[27px] items-center border-r-2 border-[#b5b5b5]">
        <button aria-label="固定菜单">
          <svg width="14" height="14" viewBox="0 0 14 14"><path d="M8 0l6 6-2 .5-2.500 2.500v3L8 13 5.500 9.500 0 14l4-6L1 5l1-1h3.500L8 1.500z" fill="#3f86ad" /></svg>
        </button>
      </div>
      <div className="ml-[13px] flex items-center">
        <button aria-label="主页" className="mr-[7px]"><Icon name="house" /></button>
        {quickTools.map(([label, icon]) => (
          <div key={icon} className="flex w-10 items-center">
            <button aria-label={label}><Icon name={icon} /></button>
            <button aria-label={`${label}选项`} className="flex h-5 w-5 items-center justify-center text-[#444]"><Caret /></button>
          </div>
        ))}
        <div className="-ml-[3px] flex h-[26px] border border-[#999]">
          <button aria-label="选择" className="flex w-[26px] items-center justify-center bg-[#b3b3b3]"><Icon name="cursor" /></button>
          <button aria-label="选择选项" className="flex w-3 items-center justify-center border-l border-[#999]"><Caret /></button>
        </div>
        <button aria-label="重建模型" className="ml-[3px]"><Icon name="traffic" /></button>
        <button aria-label="文件属性" className="ml-[6px]"><Icon name="list" size={19} /></button>
        <div className="relative ml-[3px] flex h-[26px] border border-[#999]">
          <button aria-label="选项" className="flex w-[26px] items-center justify-center"><Icon name="gear" size={18} /></button>
          <button aria-label="选项菜单" aria-expanded={open} onClick={() => setOpen(!open)} className="flex w-[13px] items-center justify-center border-l border-[#999]"><Caret /></button>
          {open && <OptionsMenu />}
          <svg width="130" height="110" viewBox="0 0 130 110" className="pointer-events-none absolute top-[40px] left-[66px] z-40" aria-hidden="true">
            <path d="M4 5 22 10 20 14 125 105 26 30 19 21 15 22z" fill="#fb3b39" />
          </svg>
        </div>
        <button aria-label="外观" className="ml-[2px]"><Icon name="grayBall" /></button>
      </div>
      <p className="ml-[251px] text-xs">实验.SLDPRT *</p>
      <div className="mr-[9px] ml-auto flex h-6 w-[203px] items-center border border-black bg-[#eef0f4] px-1">
        <svg width="17" height="17" viewBox="0 0 17 17" fill="none" aria-hidden="true">
          <circle cx="8.500" cy="8.500" r="7.500" fill="#fff" stroke="#333" />
          <path d="M6 7c0-3.500 5-3.500 5-.5 0 2-2.500 2-2.500 4M8.500 12v2" stroke="#2f7fa6" strokeWidth="2" />
        </svg>
        <input aria-label="搜索 SOLIDWORKS 帮助" placeholder="搜索 SOLIDWORKS 帮助" className="ml-1 w-0 flex-1 bg-transparent text-xs outline-none placeholder:text-[#555]" />
        <button aria-label="搜索" className="mr-1">
          <svg width="18" height="18" viewBox="0 0 18 18" fill="none"><path d="M2 16l5-5" stroke="#2f6f92" strokeWidth="2.500" /><circle cx="10.500" cy="7" r="5.500" fill="#e6f3fa" stroke="#6aa0bd" strokeWidth="1.500" /></svg>
        </button>
        <Caret />
      </div>
      <button aria-label="登录">
        <svg width="14" height="20" fill="#d0d0d0" stroke="#8f8f8f"><circle cx="7" cy="5" r="4" /><path d="M1 19v-5q0-5 6-5t6 5v5z" /></svg>
      </button>
      <button className="mr-[5px] ml-[13px] flex items-center gap-3 text-lg font-bold text-[#333]">?<Caret className="text-black" /></button>
      <WindowButtons />
    </header>
  );
}

function BigButton({ icon, lines, caret = false, mid = false, className = 'w-[49px]' }: { icon: string; lines: string[]; caret?: boolean; mid?: boolean; className?: string }) {
  return (
    <button className={`flex h-[86px] shrink-0 flex-col items-center text-[13px] leading-[13px] ${mid ? 'pt-[18px]' : 'pt-[11px]'} ${className}`}>
      <Icon name={icon} />
      {lines.map((line) => <span key={line} className="whitespace-nowrap">{line}</span>)}
      {caret && <Caret className="mt-auto mb-[11px] text-[#333]" />}
    </button>
  );
}

function SmallButtons({ items, className = '' }: { items: [string, string][]; className?: string }) {
  return (
    <div className={`flex shrink-0 flex-col pt-[5px] text-[13px] ${className}`}>
      {items.map(([icon, label]) => (
        <button key={icon} className="flex h-[26px] items-center gap-[6px] whitespace-nowrap">
          <Icon name={icon} />
          {label}
        </button>
      ))}
    </div>
  );
}

function Divider() {
  return <div className="my-[6px] w-px shrink-0 bg-[#c0c0c0]" />;
}

function Ribbon() {
  return (
    <div className="flex h-[87px] shrink-0 border-b border-[#878787] bg-[#f7f7f7]">
      <BigButton icon="boss" lines={['拉伸凸', '台/基体']} mid className="ml-[6px] w-[53px]" />
      <BigButton icon="revolve" lines={['旋转凸', '台/基体']} mid className="w-[53px]" />
      <SmallButtons className="ml-[2px] w-[119px]" items={[['sweep', '扫描'], ['loft', '放样凸台/基体'], ['boundary', '边界凸台/基体']]} />
      <Divider />
      <BigButton icon="cutExtrude" lines={['拉伸切', '除']} mid />
      <BigButton icon="hole" lines={['异型孔', '向导']} caret />
      <BigButton icon="cutRevolve" lines={['旋转切', '除']} mid />
      <SmallButtons className="ml-[3px] w-[89px]" items={[['cutSweep', '扫描切除'], ['cutLoft', '放样切割'], ['cutBoundary', '边界切除']]} />
      <Divider />
      <BigButton icon="fillet" lines={['圆角']} caret className="w-[38px]" />
      <BigButton icon="pattern" lines={['线性阵', '列']} caret className="w-[47px]" />
      <SmallButtons className="ml-[3px] w-16" items={[['rib', '筋'], ['draft', '拔模'], ['shell', '抽壳']]} />
      <SmallButtons className="w-[63px]" items={[['wrap', '包覆'], ['intersect', '相交'], ['mirror', '镜向']]} />
      <Divider />
      <BigButton icon="refGeom" lines={['参考几', '何体']} caret className="w-[51px]" />
      <BigButton icon="curve" lines={['曲线']} caret className="mr-[2px] w-[34px]" />
      <Divider />
      <button className="flex w-[62px] flex-col items-center pt-[17px] text-xs leading-4">
        <Icon name="instant" />
        Instant3D
      </button>
    </div>
  );
}

const tabs: [string, string][] = [
  ['草图', 'w-14'], ['曲面', 'w-14'], ['钣金', 'w-14'], ['标注', 'w-14'], ['评估', 'w-14'],
  ['MBD Dimensions', 'w-[107px]'], ['SOLIDWORKS 插件', 'w-[117px]'], ['MBD', 'w-[57px]'],
];

function CommandTabs() {
  return (
    <div className="relative flex h-[22px] w-max text-xs text-[#222]">
      <button className="w-[55px] bg-[#f7f7f7] text-[13px] text-[#666]">特征</button>
      {tabs.map(([label, width]) => (
        <button key={label} className={`border-b border-l border-[#878787] bg-[#d4d4d4] whitespace-nowrap last:border-r ${width}`}>{label}</button>
      ))}
    </div>
  );
}

const sideTools = ['wireFill', 'wire', 'wire', 'wire', 'wire', 'wire', 'wireIso', '-', 'sketchNew', 'sketchEdit', 'dimension', '-', 'copyBlue', 'copyWhite'];

type Node = { icon: string; label: string; arrow?: 'right' | 'down'; deep?: boolean; error?: boolean };

const nodes: Node[] = [
  { icon: 'history', label: 'History', arrow: 'right' },
  { icon: 'sensor', label: '传感器' },
  { icon: 'notes', label: '注解', arrow: 'right' },
  { icon: 'bodies', label: '实体(2)', arrow: 'down' },
  { icon: 'cube', label: '凸台-拉伸1', deep: true },
  { icon: 'cubeWhite', label: '凸台-拉伸2', deep: true },
  { icon: 'sigma', label: '方程式' },
  { icon: 'material', label: '材质 <未指定>' },
  { icon: 'plane', label: '前视基准面' },
  { icon: 'plane', label: '上视基准面' },
  { icon: 'plane', label: '右视基准面' },
  { icon: 'origin', label: '原点' },
  { icon: 'boss', label: '凸台-拉伸1', arrow: 'right' },
  { icon: 'boss', label: '凸台-拉伸2', arrow: 'down' },
  { icon: 'sketch', label: '草图3', deep: true },
  { icon: 'indent', label: '压凹2', error: true },
];

function FeaturePanel() {
  return (
    <aside className="relative flex w-[275px] shrink-0 border-r border-[#878787] bg-[#f7f7f7]">
      <div className="flex w-[30px] shrink-0 flex-col items-end pt-[3px]">
        <div className="mb-[6px] h-[3px] w-[27px] border-t-2 border-dotted border-[#999]" />
        {sideTools.map((name, i) =>
          name === '-' ? (
            <div key={i} className="mt-[2px] mb-[6px] h-px w-[25px] bg-[#878787]" />
          ) : (
            <button key={i} aria-label={`视图工具 ${i + 1}`} className="flex h-[26px] w-7 items-center justify-center pr-[2px]"><Icon name={name} size={19} /></button>
          )
        )}
        <div className="mt-[6px] h-px w-[30px] bg-[#878787]" />
      </div>
      <div className="mr-[2px] ml-[2px] min-w-0 flex-1 pt-[2px]">
        <div className="flex h-4 items-center justify-center border-y border-[#b9b9b9]">
          <span className="h-[6px] w-[6px] rounded-full border border-[#888] bg-[#ccc]" />
        </div>
        <div className="mt-1 flex h-[26px] border-b border-[#878787]">
          {['part', 'listHead', 'tree', 'target', 'ball'].map((name, i) => (
            <button
              key={name}
              aria-label={`管理器标签 ${i + 1}`}
              className={`flex w-10 items-center justify-center border-t border-r border-[#878787] ${i === 0 ? '-mb-px bg-[#f7f7f7]' : 'bg-[#d4d4d4]'}`}
            >
              <Icon name={name} size={19} />
            </button>
          ))}
          <button aria-label="更多" className="ml-auto flex w-5 items-center pl-[7px]">
            <svg width="8" height="12" fill="none" stroke="#555" strokeWidth="2"><path d="M1 1l5 5-5 5" /></svg>
          </button>
        </div>
        <label className="mr-px ml-[3px] flex h-[26px] items-center border border-[#b9b9b9] px-px">
          <Icon name="funnel" size={19} />
          <input aria-label="过滤" className="w-0 flex-1 bg-transparent pl-1 text-xs outline-none" />
        </label>
        <ul className="border-b-[3px] border-[#3b8cc6] text-xs">
          <li className="flex h-[22px] items-center pl-[2px] text-[#d00000]">
            <Icon name="part" size={19} />
            <Icon name="down" size={19} className="mx-[4px]" />
            <span className="font-['DejaVu_Sans','Noto_Sans_CJK_SC',sans-serif] whitespace-nowrap">实验 (默认&lt;&lt;默认&gt;_显示状态 1&gt;)</span>
          </li>
          {nodes.map((n, i) => (
            <li key={i} className={`flex h-[22px] items-center ${n.error ? 'text-[#c8000a]' : ''}`}>
              <span className="flex w-6 items-center pl-[7px] text-[#555]">
                {n.arrow && <Caret className={n.arrow === 'right' ? '-rotate-90' : ''} />}
              </span>
              <Icon name={n.icon} size={19} className={n.deep ? 'ml-6' : ''} />
              {n.error && <Icon name="error" size={19} className="ml-[5px]" />}
              <span className={`ml-[5px] ${n.icon === 'material' ? "font-['DejaVu_Sans','Noto_Sans_CJK_SC',sans-serif]" : ''}`}>{n.label}</span>
            </li>
          ))}
        </ul>
      </div>
      <button aria-label="折叠面板" className="absolute top-[386px] -right-[9px] flex h-[39px] w-[9px] items-center justify-center border border-l-0 border-[#878787] bg-[#f7f7f7]">
        <span className="h-[6px] w-[6px] rounded-full border border-[#888] bg-[#ccc]" />
      </button>
    </aside>
  );
}

function Scene() {
  return (
    <svg viewBox="0 0 1920 855" preserveAspectRatio="xMidYMid slice" className="absolute inset-0 h-full w-full" aria-hidden="true">
      <defs>
        <linearGradient id="sky" x1="0" y1="0" x2="0" y2="1">
          <stop offset="0" stopColor="#ffffff" />
          <stop offset=".3" stopColor="#fdfdfe" />
          <stop offset=".58" stopColor="#e2e5ef" />
          <stop offset=".75" stopColor="#fbfbfd" />
          <stop offset="1" stopColor="#fafbfd" />
        </linearGradient>
        <linearGradient id="side" x1="0" y1="0" x2="0" y2="1">
          <stop offset="0" stopColor="#eceef5" />
          <stop offset=".4" stopColor="#dfe3ee" />
          <stop offset=".8" stopColor="#f1f3f8" />
          <stop offset="1" stopColor="#f5f6fa" />
        </linearGradient>
      </defs>
      <path d="M0 0h1920v855H0z" fill="url(#sky)" />
      <path d="M1500 0h420v855h-620z" fill="url(#side)" />
      <path d="M345 203 1284 0H1405L487 199z" fill="#fff" />
      <path d="M345 203 487 199 595 855H453z" fill="#eeeeee" />
      <path d="M487 199 1405 0H1645L1770 757 1319 855H595z" fill="#c5bac3" />
      <path d="M453 855 345 203 1284 0M345 203 487 199" fill="none" stroke="#111" strokeWidth="1.400" />
      <path d="M595 855 487 199 1405 0M1645 0 1770 757 1319 855" fill="none" stroke="#f08a1c" strokeWidth="1.400" />
      <path d="M595 855 487 199 1405 0M1645 0 1770 757 1319 855" fill="none" stroke="#7a4310" strokeWidth="1.400" strokeDasharray="3 3" />
      <g stroke="#1010f0" fill="#1010f0">
        <path d="M986 482 982 455M986 482l12-2M982 482h9M986.500 478v9M983 479l7 7M990 479l-7 7" fill="none" />
        <path d="M981 451l-1 8 5-1zM1000 480l-7-2 1 4z" />
      </g>
      <g>
        <path d="M314 796 311 776" stroke="#2e7d32" strokeWidth="4" />
        <path d="M309 768l-4 9h9z" fill="#14651c" />
        <path d="M314 795l20-3" stroke="#b71c1c" strokeWidth="3" />
        <path d="M332 787l11 3-10 6z" fill="#a31212" />
        <path d="M313 797h12" stroke="#1a1a9c" strokeWidth="4" />
        <circle cx="327" cy="796" r="4.500" fill="#1212c8" />
        <text x="305" y="765" fontSize="10" fill="#14801c" fontFamily="Liberation Serif, serif" fontWeight="700">Y</text>
        <text x="338" y="793" fontSize="10" fill="#e01010" fontFamily="Liberation Serif, serif" fontWeight="700">X</text>
        <text x="328" y="799" fontSize="9" fill="#1212f0" fontFamily="Liberation Serif, serif" fontWeight="700">Z</text>
      </g>
    </svg>
  );
}

function TaskPane() {
  return (
    <div className="mt-[53px] w-[26px] self-start">
      <div className="flex flex-col border-t border-l border-[#878787]">
        {['house', 'books', 'folderOpen', 'palette', 'ball', 'listHead', 'chat'].map((name, i) => (
          <button key={name} aria-label={`任务窗格 ${i + 1}`} className={`flex h-6 items-center justify-center border-b border-[#878787] ${i === 0 ? 'bg-[#f7f7f7]' : 'bg-[#d4d4d4]'}`}>
            <Icon name={name} size={19} />
          </button>
        ))}
      </div>
      <div className="mt-[14px] ml-[15px] h-[60px] w-2 rounded-full border border-white bg-gradient-to-b from-[#9a9aa2] from-25% via-[#22c96e] via-25% to-[#6be070] shadow" />
    </div>
  );
}

function HeadsUp() {
  return (
    <>
      <div className="absolute top-[5px] left-[907px] flex items-center text-[#888]">
        <button aria-label="整屏显示全图"><Icon name="zoomFit" /></button>
        <button aria-label="隐藏项目" className="ml-[191px]"><Icon name="eye" /></button>
        <Caret className="ml-[5px]" />
        <button aria-label="编辑外观" className="ml-2"><Icon name="appearance" /></button>
        <button aria-label="应用布景" className="ml-[6px]"><Icon name="scene" /></button>
        <button aria-label="视图设置" className="ml-5"><Icon name="monitor" /></button>
        <Caret className="ml-[6px]" />
        <button aria-label="正视于" className="ml-2"><Icon name="pinPlane" /></button>
      </div>
      <div className="absolute top-[5px] right-[7px] flex items-center text-[#8d8d8d]">
        {['M8 4 4 7l4 3z', 'M5 4l4 3-4 3z'].map((d) => (
          <button key={d} aria-label="窗格" className="flex h-5 w-[26px] items-center justify-center">
            <svg width="13" height="14" fill="none" stroke="currentColor"><path d="M1 1h11v12H1z" /><path d={d} fill="currentColor" /></svg>
          </button>
        ))}
        <WindowButtons />
      </div>
    </>
  );
}

function Watermark() {
  return (
    <svg width="370" height="180" viewBox="0 0 370 180" className="pointer-events-none absolute right-[84px] bottom-[41px] z-30" aria-hidden="true">
      <g fill="#ababab" fontFamily="Open Sans, Noto Sans CJK SC, sans-serif">
        <text x="165" y="144" fontSize="20">激活 Windows</text>
        <text x="165" y="166" fontSize="15">转到“设置”以激活 Windows。</text>
      </g>
      <g fill="#ffffff" fillOpacity=".7" stroke="#9c9aa0" strokeOpacity=".35" strokeWidth="1">
        <text x="7" y="122" fontSize="76" fontWeight="700" fontFamily="Liberation Sans, sans-serif">Bai</text>
        <ellipse cx="139" cy="58" rx="12" ry="16" />
        <ellipse cx="163" cy="33" rx="12" ry="17" />
        <ellipse cx="194" cy="35" rx="12" ry="16" transform="rotate(12 194 35)" />
        <ellipse cx="212" cy="65" rx="12" ry="16" />
        <path d="M175 60c12 0 17 8 24 17 8 10 19 13 19 29 0 14-11 20-24 19-13-3-25-3-38 0-13 1-22-6-22-20 0-15 13-20 21-29 6-9 10-16 20-16z" />
        <text x="230" y="119" fontSize="58" fontWeight="900" fontFamily="Noto Sans CJK SC, sans-serif">经验</text>
        <text x="7" y="166" fontSize="40" fontWeight="500" fontFamily="Noto Sans, sans-serif">jingyan.baidu.com</text>
      </g>
      <text x="145" y="113" fontSize="46" fontWeight="700" fill="#ffffff" fillOpacity=".6" stroke="#c9c5cc" strokeWidth="2" fontFamily="Inter, sans-serif">du</text>
    </svg>
  );
}

function BottomTabs() {
  return (
    <div className="flex h-4 shrink-0 border-t border-[#878787] bg-[#f7f7f7] text-xs leading-[11px]">
      <div className="ml-[32px] w-px bg-[#9db5ba]" />
      <div className="ml-[26px] flex border-t border-[#555]">
        {['M4 3v8M10 3 5 7l5 4z', 'M10 3 5 7l5 4z', 'M5 3l5 4-5 4z', 'M5 3l5 4-5 4zM11 3v8'].map((d, i) => (
          <button key={i} aria-label={`标签滚动 ${i + 1}`} className="h-[14px] w-4 border border-[#8f8f8f] bg-[#a8a8a8]">
            <svg width="14" height="12" viewBox="0 0 15 14"><path d={d} fill="#878787" stroke="#878787" /></svg>
          </button>
        ))}
      </div>
      <button className="h-3 w-[49px] text-[13px]">模型</button>
      <div className="flex h-[14px] border-r border-[#878787] bg-[#d4d4d4]">
        <button className="h-3 w-[59px]">3D 视图</button>
        <button className="h-[14px] w-[84px] border-l border-[#878787] pr-2 pb-[2px]">运动算例 1</button>
      </div>
    </div>
  );
}

function FilterBar() {
  const badge = 'M12 12h7v2h-2v4h-3v-4h-2z';
  return (
    <div className="flex h-[33px] shrink-0 items-center border-b border-[#878787] bg-[#f7f7f7]">
      <div className="ml-1 h-[26px] border-l-2 border-dotted border-[#999]" />
      <button aria-label="清除过滤器" className="ml-[11px]"><Svg><path d="M4 5h12v2l-4 4v5H8v-5L4 7z" fill="#d4d4d4" stroke={G} /></Svg></button>
      <button aria-label="清除所有过滤器" className="ml-[6px]"><Svg><path d="M1 2h10v2h3v2h5v2l-4 4v6h-4v-6L6 9 1 4z" fill="#ededed" stroke={G} /><path d="M4 6h10M8 9h10" stroke={G} /></Svg></button>
      <button aria-label="选择所有过滤器" className="ml-[7px]"><Svg><path d="M1 2h11v3h3v3h4v2l-4 4v4h-4v-4L5 8 1 4z" fill="#cf9be6" stroke="#58197a" strokeWidth="1.200" /><path d="M4 5.500h10M7 9h11" stroke="#58197a" /></Svg></button>
      <div className="ml-1 flex h-[26px] border border-[#999]">
        <button aria-label="选择" className="flex w-[29px] items-center justify-center bg-[#b3b3b3] pr-1"><Icon name="cursor" /></button>
        <button aria-label="选择选项" className="flex w-[13px] items-center justify-center border-l border-[#999]"><Caret /></button>
      </div>
      <button aria-label="反选" className="ml-1"><Svg><path d="M2 1v14l3-3 2 5 2-1-2-5h4z" fill="#eee" stroke={G} /><path d="M8 2l11 10h-4l2 5-3 1-2-5-4 3z" fill={G} /></Svg></button>
      <div className="mr-[10px] ml-[5px] h-[22px] w-px bg-[#878787]" />
      <div className="flex gap-[7px]">
        {filterIcons.map(([label, drawing]) => (
          <button key={label} aria-label={`过滤${label}`}>
            <Svg>{drawing}<path d={badge} fill="#a05fb8" stroke="#f7f7f7" strokeWidth=".6" /></Svg>
          </button>
        ))}
        {meshIcons.map(([label, drawing]) => (
          <button key={label} aria-label={`过滤${label}`}>
            <Svg>
              {drawing}
              <path d="M8 10l6-8 5-1v10z" fill="#ccc" stroke={K} /><path d="M14 2v9M11 6l8 1M8 10l11-5" stroke={K} />
              <path d={badge} fill="#b400e0" />
            </Svg>
          </button>
        ))}
      </div>
      <div className="ml-[10px] w-px self-stretch bg-[#878787]" />
    </div>
  );
}

function StatusBar() {
  return (
    <footer className="flex h-[18px] shrink-0 items-center bg-[#f7f7f7] text-xs">
      <span className="ml-px">SOLIDWORKS Premium 2020 SP0.0</span>
      <span className="ml-auto">在编辑 零件</span>
      <button aria-label="重建" className="ml-[28px]">
        <Svg size={17}><path d="M1 18h14M1 15h14" stroke="#1b526f" strokeWidth="2" strokeDasharray="3 1" /><path d="M1 12 7 1l6 11z" fill="#ffc81e" stroke="#7b5a00" /><path d="M7 4v5M7 10v1.500" stroke="#c00" strokeWidth="1.500" /><path d="M11 14c5 0 6-4 6-8M14 7l3-6 3 6z" fill="#222" stroke="#222" /></Svg>
      </button>
      <button className="ml-[71px] flex items-center gap-4">自定义<Caret className="rotate-180" /></button>
      <button aria-label="标签" className="mr-[2px] ml-7">
        <Svg size={17}><path d="M1 4l9-3 9 8-2 8-6 2L2 11z" fill="#ddd" stroke={K} /><circle cx="8" cy="7" r="3" fill="#fff" stroke={K} /><path d="M1 11l10 8M11 13l8-4" stroke={K} /></Svg>
      </button>
    </footer>
  );
}

export default function App() {
  return (
    <div className="relative flex h-screen flex-col overflow-hidden bg-[#f7f7f7] font-['Noto_Sans','Noto_Sans_CJK_SC',sans-serif] text-black">
      <Header />
      <Ribbon />
      <main className="relative flex min-h-0 flex-1 flex-col">
        <Scene />
        <HeadsUp />
        <CommandTabs />
        <div className="relative flex min-h-0 flex-1 justify-between">
          <FeaturePanel />
          <TaskPane />
        </div>
      </main>
      <BottomTabs />
      <FilterBar />
      <StatusBar />
      <Watermark />
    </div>
  );
}
